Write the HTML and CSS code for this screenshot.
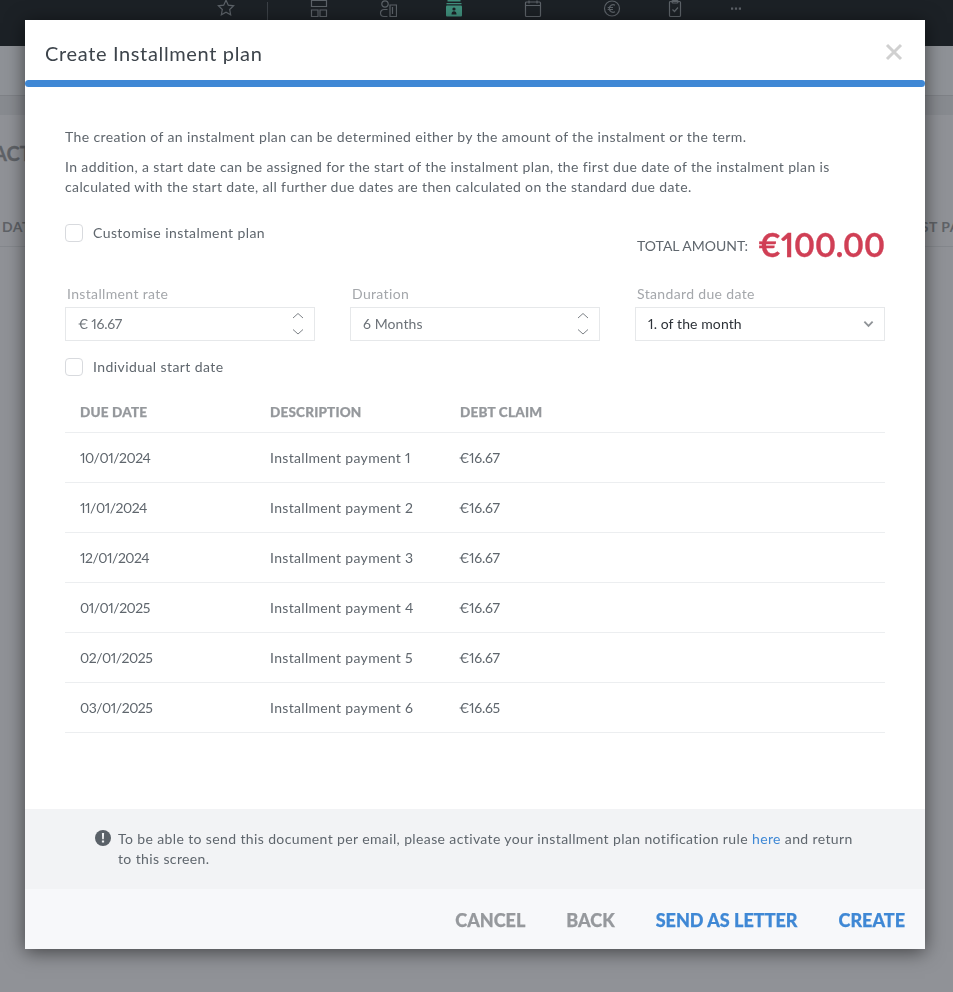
FILE: index.html
```html
<!DOCTYPE html>
<html lang="en">
<head>
<meta charset="utf-8">
<title>Create Installment plan</title>
<link rel="stylesheet" href="styles.css">
</head>
<body>
<div class="page">
  <header class="topbar">
    <svg class="nav-icon star" viewBox="0 0 18 18"><path d="M9 1.2l2.3 5 5.3.6-3.9 3.700 1 5.400L9 13.300l-4.700 2.600 1-5.400-3.900-3.700 5.300-.6z"/></svg>
    <span class="nav-sep"></span>
    <svg class="nav-icon layout" viewBox="0 0 18 18"><path d="M1.500.5h15v6h-15zM1.500 10h6.500v6.500h-6.500zM10 10h6.500v6.500H10z"/></svg>
    <svg class="nav-icon person" viewBox="0 0 18 18"><circle cx="6" cy="4" r="3.200"/><path d="M8.500 9.500H5a3.500 3.500 0 0 0 0 7h3.500"/><path class="fill" d="M11 5h6.500v11.500H11zM13.500 7v7"/></svg>
    <svg class="nav-icon active" viewBox="0 0 18 18"><path class="band" d="M2.500 0h13v1.500h-13zM1.500 3h15v1.300h-15z"/><rect class="box" x="1" y="5.500" width="16" height="11" rx="1"/><circle class="dark" cx="9" cy="9" r="1.600"/><path class="dark" d="M6.500 14.500c0-2 1-3.200 2.500-3.200s2.500 1.200 2.500 3.200z"/></svg>
    <svg class="nav-icon calendar" viewBox="0 0 18 18"><rect x="1.500" y="2" width="15" height="14.500" rx="1"/><path d="M1.500 5.500h15M5 .5v3M13 .5v3"/></svg>
    <svg class="nav-icon euro" viewBox="0 0 18 18"><circle cx="9" cy="8.500" r="7.500"/><path d="M12 5.200A3.800 3.800 0 0 0 6.300 8.500 3.800 3.800 0 0 0 12 11.800M4.700 7.500h5.300M4.700 9.500h5.300"/></svg>
    <svg class="nav-icon clipboard" viewBox="0 0 18 18"><rect x="3.500" y="1.500" width="11" height="15" rx="1"/><rect x="6" y=".5" width="6" height="2.500" rx="1"/><path d="M6.500 9.500l2 2 3.500-4"/></svg>
    <svg class="nav-icon dots" viewBox="0 0 18 18"><path class="solid" d="M4 7.500h2.200v2.200H4zM7.900 7.500h2.200v2.200H7.900zM11.800 7.500H14v2.200h-2.200z"/></svg>
  </header>
  <div class="subbar"></div>
  <div class="strip"></div>
  <div class="page-body">
    <div class="page-title"><span>ACT</span></div>
    <div class="page-head"><span>DATE</span><span class="last">LAST PAYMENT</span></div>
  </div>
</div>

<div class="modal">
  <div class="modal-head">
    <h1>Create Installment plan</h1>
    <svg class="close" viewBox="0 0 18 18"><path d="M2 2l14 14M16 2L2 16"/></svg>
  </div>
  <div class="progress"></div>
  <div class="modal-body">
    <p class="intro">The creation of an instalment plan can be determined either by the amount of the instalment or the term.</p>
    <p class="intro second">In addition, a start date can be assigned for the start of the instalment plan, the first due date of the instalment plan is calculated with the start date, all further due dates are then calculated on the standard due date.</p>

    <div class="summary">
      <label class="check"><span class="box"></span>Customise instalment plan</label>
      <div class="total"><span class="total-label">TOTAL AMOUNT:</span><span class="total-value">€100.00</span></div>
    </div>

    <div class="fields">
      <div class="field">
        <div class="field-label">Installment rate</div>
        <div class="input"><span class="amount">€ 16.67</span>
          <svg class="spin" viewBox="0 0 12 24"><path d="M1 6L6 1.500 11 6M1 17.500L6 22l5-4.500"/></svg>
        </div>
      </div>
      <div class="field">
        <div class="field-label">Duration</div>
        <div class="input"><span>6 Months</span>
          <svg class="spin" viewBox="0 0 12 24"><path d="M1 6L6 1.500 11 6M1 17.500L6 22l5-4.500"/></svg>
        </div>
      </div>
      <div class="field">
        <div class="field-label">Standard due date</div>
        <div class="input select"><span>1. of the month</span>
          <svg class="caret" viewBox="0 0 12 8"><path d="M1.500 1.500L6 6l4.500-4.500"/></svg>
        </div>
      </div>
    </div>

    <label class="check start"><span class="box"></span>Individual start date</label>

    <table class="plan">
      <thead><tr><th>DUE DATE</th><th>DESCRIPTION</th><th>DEBT CLAIM</th></tr></thead>
      <tbody>
        <tr><td>10/01/2024</td><td>Installment payment 1</td><td>€16.67</td></tr>
        <tr><td>11/01/2024</td><td>Installment payment 2</td><td>€16.67</td></tr>
        <tr><td>12/01/2024</td><td>Installment payment 3</td><td>€16.67</td></tr>
        <tr><td>01/01/2025</td><td>Installment payment 4</td><td>€16.67</td></tr>
        <tr><td>02/01/2025</td><td>Installment payment 5</td><td>€16.67</td></tr>
        <tr><td>03/01/2025</td><td>Installment payment 6</td><td>€16.65</td></tr>
      </tbody>
    </table>
  </div>
  <div class="notice">
    <svg class="notice-icon" viewBox="0 0 16 16"><circle cx="8" cy="8" r="8"/><path d="M6.900 3h2.200l-.3 6.200H7.200zM6.900 10.400h2.200v2.200H6.900z"/></svg>
    <p>To be able to send this document per email, please activate your installment plan notification rule <a href="#">here</a> and return to this screen.</p>
  </div>
  <div class="modal-foot">
    <button class="btn muted">CANCEL</button>
    <button class="btn muted">BACK</button>
    <button class="btn primary">SEND AS LETTER</button>
    <button class="btn primary">CREATE</button>
  </div>
</div>
</body>
</html>
```
FILE: styles.css
```css
* { box-sizing: border-box; }
html, body { margin: 0; height: 100%; overflow: hidden; }
body { background: #8f9297; font-family: "Lato", "Open Sans", sans-serif; color: #5f666d; font-variant-numeric: proportional-nums; }

.page { height: 992px; display: flex; flex-direction: column; overflow: hidden; }
.topbar { height: 46px; background: #1c2126; display: flex; align-items: flex-start; padding-left: 217px; flex: none; }
.nav-icon { width: 18px; height: 18px; fill: none; stroke: #5c6268; stroke-width: 1.200; flex: none; }
.nav-icon.star { margin-top: -1px; }
.nav-sep { width: 1px; height: 18px; margin: 2px 0 0 32px; background: #3c4147; }
.nav-icon.layout { margin-left: 42px; }
.nav-icon.person { margin-left: 51px; }
.nav-icon.active { margin-left: 48px; stroke: none; }
.nav-icon.calendar { margin-left: 61px; }
.nav-icon.euro { margin-left: 61px; }
.nav-icon.clipboard { margin-left: 45px; }
.nav-icon.dots { margin-left: 43px; }
.band, .box { fill: #3f8f7c; }
.dark { fill: #1c2126; }
.solid { fill: #5c6268; stroke: none; }
.subbar { height: 50px; border-bottom: 1px solid #7f8287; flex: none; background: #8f9297; }
.strip { height: 19px; background: #888b90; flex: none; }
.page-body { flex: 1; background: #909297; font-weight: 700; color: #5f6267; }
.page-title { height: 76px; padding-top: 26px; font-size: 20px; line-height: 24px; white-space: nowrap; overflow: hidden; }
.page-title span { display: inline-block; margin-left: -7px; -webkit-text-stroke: .3px #5f6267; }
.page-head { display: flex; height: 56px; padding: 28px 0 0 2px; font-size: 14px; line-height: 16px; border-bottom: 1px solid #85888d; white-space: nowrap; letter-spacing: .5px; overflow: hidden; }
.last { margin-left: auto; margin-right: -58px; flex: none; }

.modal { position: fixed; left: 25px; top: 20px; width: 900px; height: 929px; background: #fff; display: flex; flex-direction: column; box-shadow: 0 3px 18px rgba(0,0,0,.55); }
.modal-head { height: 60px; padding: 0 22px 0 20px; display: flex; align-items: center; justify-content: space-between; flex: none; padding-top: 8px; }
.modal-head h1 { margin: -2px 0 0; font-size: 20px; font-weight: 400; color: #3d444b; letter-spacing: .65px; }
.close { width: 18px; height: 18px; stroke: #d0d0d0; stroke-width: 3; fill: none; margin-top: -4px; }
.progress { height: 7px; background: #3f88d5; border-radius: 4px; flex: none; }

.modal-body { flex: 1; padding: 40px 40px 0; }
.intro { margin: 0; font-size: 14px; letter-spacing: .38px; line-height: 20px; color: #5f666d; }
.intro.second { margin-top: 10px; }
.summary { display: flex; justify-content: space-between; align-items: flex-start; margin-top: 27px; height: 47px; }
.check { display: flex; align-items: center; font-size: 14px; letter-spacing: .42px; color: #5f666d; line-height: 18px; }
.check .box { width: 18px; height: 18px; background: #fff; border: 1px solid #d8dade; border-radius: 4px; margin-right: 10px; flex: none; }
.total { display: flex; align-items: center; padding-top: 3px; }
.total-label { font-size: 14px; color: #5f666d; margin-right: 10px; }
.total-value { font-size: 31.500px; font-weight: 700; color: #d03f55; line-height: 36px; -webkit-text-stroke: .3px #d03f55; }

.fields { display: grid; grid-template-columns: repeat(3, 250px); column-gap: 35px; margin-top: 13px; }
.field-label { font-size: 14px; letter-spacing: .35px; color: #a4a7ab; line-height: 20px; padding-left: 2px; margin-bottom: 3px; }
.input { height: 34px; border: 1px solid #e6e8ea; display: flex; align-items: center; justify-content: space-between; padding: 0 10px 2px 12px; font-size: 14px; letter-spacing: .1px; color: #6c7278; }
.amount { letter-spacing: -.3px; }
.spin { width: 12px; height: 24px; stroke: #7d8287; stroke-width: 1; fill: none; margin-top: 2px; }
.select { color: #2d3238; }
.caret { width: 11px; height: 8px; stroke: #8f9397; stroke-width: 2; fill: none; margin-top: 2px; }

.check.start { margin-top: 17px; }

.plan { width: 820px; border-collapse: collapse; margin-top: 17px; table-layout: fixed; }
.plan th { height: 39px; text-align: left; font-size: 13.500px; font-weight: 900; letter-spacing: .2px; color: #95989c; padding: 0 0 0 15px; -webkit-text-stroke: .25px #95989c; }
.plan th:nth-child(1), .plan td:nth-child(1) { width: 190px; }
.plan th:nth-child(2), .plan td:nth-child(2) { width: 190px; }
.plan td { height: 50px; font-size: 14px; letter-spacing: .32px; color: #5f666d; padding: 0 0 0 15px; }
.plan td:nth-child(1) { letter-spacing: -.5px; }
.plan td:nth-child(3) { letter-spacing: -.3px; padding-left: 14px; }
.plan tr { border-bottom: 1px solid #eceef0; }

.notice { height: 80px; background: #f2f3f5; padding: 20px 70px 0 70px; display: flex; align-items: flex-start; flex: none; }
.notice-icon { width: 16px; height: 16px; fill: #5a6168; flex: none; margin: 1px 7px 0 0; }
.notice-icon path { fill: #f2f3f5; }
.notice p { margin: 0; font-size: 14px; letter-spacing: .38px; line-height: 20px; color: #5f666d; }
.notice a { color: #3f88d5; text-decoration: none; }

.modal-foot { height: 60px; background: #f7f8fa; display: flex; justify-content: flex-end; align-items: center; padding: 2px 20px 0 0; gap: 41px; flex: none; }
.btn { border: 0; background: none; padding: 0; font-family: inherit; font-size: 18px; font-weight: 900; }
.btn.muted { color: #96999d; -webkit-text-stroke: .25px #96999d; }
.btn.primary { color: #3f88d5; -webkit-text-stroke: .25px #3f88d5; }
```
